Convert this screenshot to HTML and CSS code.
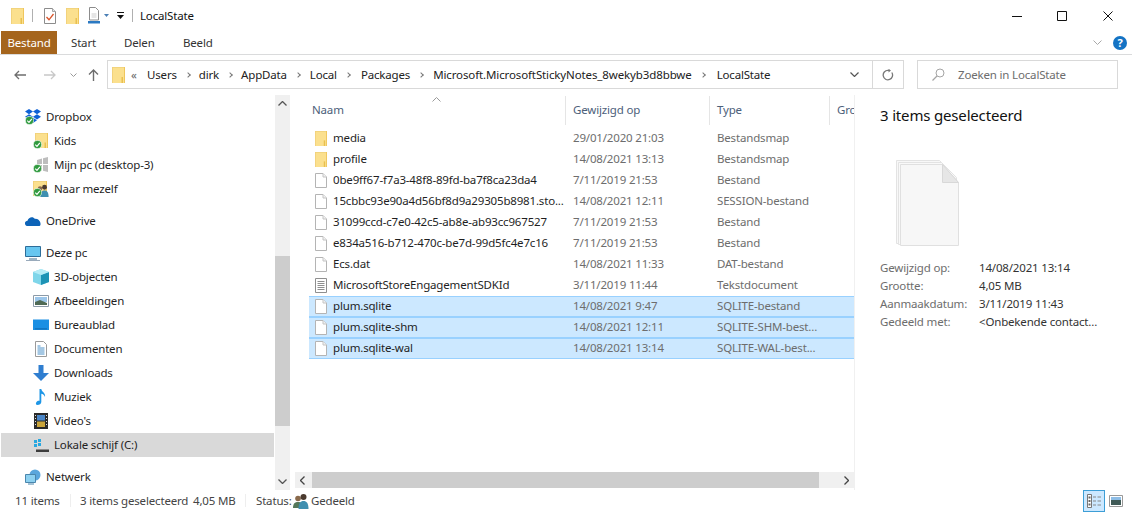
FILE: index.html
```html
<!DOCTYPE html>
<html lang="nl">
<head>
<meta charset="utf-8">
<title>LocalState</title>
<link rel="stylesheet" href="styles.css">
</head>
<body>
<svg class="defs" width="0" height="0" aria-hidden="true">
  <defs>
    <symbol id="folder" viewBox="0 0 13 16" preserveAspectRatio="none">
      <path d="M0 0h13v16H0z" fill="#fbe08e"/>
      <path d="M0 0h.8v16H0zM0 0h13v.8H0z" fill="#f0cf78"/>
      <path d="M9.500 10H11v6H9.500z" fill="#e9c04f"/>
      <path d="M12 0h1v16h-1z" fill="#efc65c"/>
    </symbol>
    <symbol id="file" viewBox="0 0 12 15" preserveAspectRatio="none">
      <path d="M.5.500h7.500l3.500 3.500v10.500H.5z" fill="#fff" stroke="#b4b4b4"/>
      <path d="M8 .5V4h3.500" fill="#f2f2f2" stroke="#c4c4c4"/>
    </symbol>
    <symbol id="textfile" viewBox="0 0 12 15" preserveAspectRatio="none">
      <path d="M.5.500h11v14H.5z" fill="#fff" stroke="#8f8f8f"/>
      <path d="M2.500 3.500h7M2.500 5.500h7M2.500 7.500h7M2.500 9.500h7M2.500 11.500h7" stroke="#8f8f8f"/>
    </symbol>
    <symbol id="badge" viewBox="0 0 10 10">
      <circle cx="5" cy="5" r="4.500" fill="#2f9a3e" stroke="#e9f5ea" stroke-width=".8"/>
      <path d="M2.500 5.200 4.400 7l3.200-3.800" fill="none" stroke="#fff" stroke-width="1.300"/>
    </symbol>
    <symbol id="people" viewBox="0 0 16 16">
      <circle cx="5" cy="5.500" r="2.800" fill="#8a6a4c"/>
      <path d="M0 15c0-4.500 2-6 5-6s5 1.500 5 6z" fill="#55785a"/>
      <circle cx="10.500" cy="4" r="3" fill="#4a3a2e"/>
      <path d="M5.500 16c0-6 2-8 5-8s5 2 5 8z" fill="#3f8fb0"/>
    </symbol>
  </defs>
</svg>

<div class="window">
  <header class="titlebar">
    <svg class="qa-folder"><use href="#folder"/></svg>
    <span class="qa-sep"></span>
    <svg class="qa-props" viewBox="0 0 12 16"><path d="M.5.500h8l3 3v12H.5z" fill="#fff" stroke="#8c8c8c"/><path d="M8.500.5v3h3" fill="#e5e5e5" stroke="#a5a5a5"/><path d="M2.500 9l2.500 2.800L9.500 6" fill="none" stroke="#d9542b" stroke-width="1.300"/></svg>
    <svg class="qa-folder"><use href="#folder"/></svg>
    <svg class="qa-new" viewBox="0 0 12 17"><path d="M1.500.5h6l3 3v9.500h-9z" fill="#fff" stroke="#8c8c8c"/><path d="M3.500 6h5v5h-5z" fill="#e6e6e6"/><path d="M0 14h12v2.500H0z" fill="#2b79c2"/></svg>
    <svg class="qa-caret" viewBox="0 0 5 3"><path d="M0 0h5L2.500 3z" fill="#4a7fb5"/></svg>
    <svg class="qa-more" viewBox="0 0 7 7"><path d="M0 .5h7" stroke="#111"/><path d="M0 3h7L3.500 7z" fill="#111"/></svg>
    <span class="qa-sep"></span>
    <span class="window-title">LocalState</span>
    <div class="caption">
      <svg class="cap-min" viewBox="0 0 10 10"><path d="M0 5.500h10" stroke="#111"/></svg>
      <svg class="cap-max" viewBox="0 0 10 10"><path d="M.5.500h9v9h-9z" fill="none" stroke="#111"/></svg>
      <svg class="cap-close" viewBox="0 0 10 10"><path d="M.5.500l9 9M9.500.500l-9 9" stroke="#111"/></svg>
    </div>
  </header>

  <nav class="tabs">
    <span class="tab tab-file">Bestand</span>
    <span class="tab tab-start">Start</span>
    <span class="tab tab-share">Delen</span>
    <span class="tab tab-view">Beeld</span>
    <span class="tabs-end">
      <svg class="ribbon-chev" viewBox="0 0 9 5"><path d="M.5.500l4 4 4-4" fill="none" stroke="#a8a8a8"/></svg>
      <span class="help">?</span>
    </span>
  </nav>

  <div class="addressrow">
    <svg class="nav-btn nav-back" viewBox="0 0 12 10"><path d="M12 5H1M5 1 1 5l4 4" fill="none" stroke="#6e6e6e" stroke-width="1.300"/></svg>
    <svg class="nav-btn nav-forward" viewBox="0 0 12 10"><path d="M0 5h11M7 1l4 4-4 4" fill="none" stroke="#c8c8c8" stroke-width="1.300"/></svg>
    <svg class="nav-recent" viewBox="0 0 7 4"><path d="M.5.500l3 3 3-3" fill="none" stroke="#9a9a9a"/></svg>
    <svg class="nav-up" viewBox="0 0 11 12"><path d="M5.500 12V1M1 5.500l4.500-4.500L10 5.500" fill="none" stroke="#6e6e6e" stroke-width="1.400"/></svg>
    <div class="address">
      <svg class="addr-folder"><use href="#folder"/></svg>
      <span class="crumb-more">«</span>
      <span class="crumb">Users</span><i class="chev"></i>
      <span class="crumb">dirk</span><i class="chev"></i>
      <span class="crumb">AppData</span><i class="chev"></i>
      <span class="crumb crumb-local">Local</span><i class="chev"></i>
      <span class="crumb crumb-packages">Packages</span><i class="chev"></i>
      <span class="crumb crumb-long">Microsoft.MicrosoftStickyNotes_8wekyb3d8bbwe</span><i class="chev"></i>
      <span class="crumb crumb-last">LocalState</span>
      <svg class="addr-drop" viewBox="0 0 9 5"><path d="M.5.500l4 4 4-4" fill="none" stroke="#555" stroke-width="1.200"/></svg>
      <span class="addr-refresh">
        <svg viewBox="0 0 12 12"><path d="M9.800 3.500A4.700 4.700 0 1 1 6 1.400H8" fill="none" stroke="#777" stroke-width="1.300"/><path d="M6.500 0 9 1.500 6.500 3.500z" fill="#777"/></svg>
      </span>
    </div>
    <div class="search">
      <svg viewBox="0 0 13 13"><circle cx="8" cy="5" r="4" fill="none" stroke="#a5a5a5"/><path d="M5 8l-4.500 4.500" stroke="#a5a5a5" stroke-width="1.200"/></svg>
      <span>Zoeken in LocalState</span>
    </div>
  </div>

  <main class="main">
    <aside class="navpane">
      <div class="tree">
        <div class="tree-group">
          <div class="tree-row">
            <svg class="ico" viewBox="0 0 16 16"><path d="M4 0 0 2.600l4 2.600 4-2.600zm8 0L8 2.600l4 2.600 4-2.600zM0 7.800l4 2.600 4-2.600-4-2.600zm12-2.600L8 7.800l4 2.600 4-2.600zM4 11.300l4 2.600 4-2.600-4-2.600z" fill="#0f62d6"/><use href="#badge" width="9" height="9" y="7"/></svg>
            <span>Dropbox</span>
          </div>
          <div class="tree-row sub">
            <svg class="ico" viewBox="0 0 16 16"><use href="#folder" x="2" width="13" height="15"/><use href="#badge" width="9" height="9" y="7"/></svg>
            <span>Kids</span>
          </div>
          <div class="tree-row sub">
            <svg class="ico" viewBox="0 0 16 16"><path d="M4 3l5-1.500V7H4zm6-1.700L15 0v7h-5zM4 8h5v5.500L4 12zm6 0h5v7l-5-1.300z" fill="#bdbdbd"/><use href="#badge" width="9" height="9" y="7"/></svg>
            <span>Mijn pc (desktop-3)</span>
          </div>
          <div class="tree-row sub">
            <svg class="ico" viewBox="0 0 16 16"><use href="#folder" width="14" height="15"/><use href="#people" x="3" y="3" width="13" height="13"/><use href="#badge" width="9" height="9" y="7"/></svg>
            <span>Naar mezelf</span>
          </div>
        </div>
        <div class="tree-group">
          <div class="tree-row">
            <svg class="ico" viewBox="0 0 16 16"><path d="M3 13c-4 0-4-5-.5-5.200C3.500 4 8 3 10 6c3-1 6 3 5.500 5.500 0 1-1 1.500-1.500 1.500z" fill="#0c63b8"/></svg>
            <span>OneDrive</span>
          </div>
        </div>
        <div class="tree-group">
          <div class="tree-row">
            <svg class="ico" viewBox="0 0 16 16"><path d="M.5 1.500h15v10H.5z" fill="#67c6f0" stroke="#2d6d99"/><path d="M4 13.500h8v1H4z" fill="#3d6a8c"/><path d="M1 15h14v1H1z" fill="#9ab"/></svg>
            <span>Deze pc</span>
          </div>
          <div class="tree-row sub">
            <svg class="ico" viewBox="0 0 16 16"><path d="M8 0l8 3v10l-8 3-8-3V3z" fill="#7fd6ea"/><path d="M8 6v10l8-3V3z" fill="#1d93b5"/><path d="M0 3l8 3 8-3-8-3z" fill="#b6ecf6"/></svg>
            <span>3D-objecten</span>
          </div>
          <div class="tree-row sub">
            <svg class="ico" viewBox="0 0 16 16"><path d="M.5 2.500h15v11H.5z" fill="#fff" stroke="#8b9aa8"/><path d="M2 4h12v5H2z" fill="#9cc6ea"/><path d="M2 9l5-2 7 3v2H2z" fill="#4f6a55"/></svg>
            <span>Afbeeldingen</span>
          </div>
          <div class="tree-row sub">
            <svg class="ico" viewBox="0 0 16 16"><path d="M0 2.500h16v10.500H0z" fill="#1a8fe3"/><path d="M2 11.500h12v.8H2z" fill="#0b5c9e"/></svg>
            <span>Bureaublad</span>
          </div>
          <div class="tree-row sub">
            <svg class="ico" viewBox="0 0 16 16"><path d="M2.500.500h8l3 3v12h-11z" fill="#fff" stroke="#9a9a9a"/><path d="M4.500 5h3M4.500 7h7M4.500 9h7M4.500 11h7M4.500 13h7" stroke="#4a90c8"/></svg>
            <span>Documenten</span>
          </div>
          <div class="tree-row sub">
            <svg class="ico" viewBox="0 0 16 16"><path d="M5.500 0h5v8H16l-8 8-8-8h5.500z" fill="#2f7ed0"/></svg>
            <span>Downloads</span>
          </div>
          <div class="tree-row sub">
            <svg class="ico" viewBox="0 0 16 16"><path d="M6.500 0h1.800c.3 3 4.700 3.800 3.700 8-.5-2-2.200-3-3.700-3.300V13c0 2-2 3-3.800 3S2.500 14.500 3.500 13c.8-1.200 2-1.500 3-1.200z" fill="#1e96e6"/></svg>
            <span>Muziek</span>
          </div>
          <div class="tree-row sub">
            <svg class="ico" viewBox="0 0 16 16"><path d="M1 0h14v16H1z" fill="#2a2a2a"/><path d="M4 2h8v5.500H4z" fill="#4a86c8"/><path d="M4 8.500h8V14H4z" fill="#c9a43a"/><path d="M2 2h1v1H2zm0 3h1v1H2zm0 3h1v1H2zm0 3h1v1H2zm11-9h1v1h-1zm0 3h1v1h-1zm0 3h1v1h-1zm0 3h1v1h-1z" fill="#ddd"/></svg>
            <span>Video's</span>
          </div>
          <div class="tree-row sub selected">
            <svg class="ico" viewBox="0 0 16 16"><path d="M1 3h3v3H1zm4-1h3v3H5zM1 7h3v3H1zm4-1h3v3H5z" fill="#28a8e0"/><path d="M3 12.500h13V15H3z" fill="#3c3c3c"/></svg>
            <span>Lokale schijf (C:)</span>
          </div>
        </div>
        <div class="tree-group">
          <div class="tree-row">
            <svg class="ico" viewBox="0 0 16 16"><circle cx="10" cy="6" r="5.500" fill="#5aa6dc"/><path d="M.5 5.500h10v8h-10z" fill="#8cd0f0" stroke="#4a86ad"/><path d="M3 14.500h6v1H3z" fill="#4a86ad"/></svg>
            <span>Netwerk</span>
          </div>
        </div>
      </div>
      <div class="vscroll">
        <svg class="sb-arrow" viewBox="0 0 9 5"><path d="M.5 4.500l4-4 4 4" fill="none" stroke="#555" stroke-width="1.300"/></svg>
        <div class="vtrack"><div class="vthumb"></div></div>
        <svg class="sb-arrow" viewBox="0 0 9 5"><path d="M.5.500l4 4 4-4" fill="none" stroke="#555" stroke-width="1.300"/></svg>
      </div>
    </aside>

    <section class="listpane">
      <div class="colhead">
        <svg class="sort" viewBox="0 0 9 5"><path d="M.5 4.500l4-4 4 4" fill="none" stroke="#9a9a9a"/></svg>
        <div class="col-name head">Naam</div>
        <div class="col-date head">Gewijzigd op</div>
        <div class="col-type head">Type</div>
        <div class="col-more head">Grc</div>
      </div>
      <div class="rows">
        <div class="row"><svg class="fi"><use href="#folder"/></svg><span class="col-name">media</span><span class="col-date">29/01/2020 21:03</span><span class="col-type">Bestandsmap</span></div>
        <div class="row"><svg class="fi"><use href="#folder"/></svg><span class="col-name">profile</span><span class="col-date">14/08/2021 13:13</span><span class="col-type">Bestandsmap</span></div>
        <div class="row"><svg class="fi"><use href="#file"/></svg><span class="col-name">0be9ff67-f7a3-48f8-89fd-ba7f8ca23da4</span><span class="col-date">7/11/2019 21:53</span><span class="col-type">Bestand</span></div>
        <div class="row"><svg class="fi"><use href="#file"/></svg><span class="col-name">15cbbc93e90a4d56bf8d9a29305b8981.sto...</span><span class="col-date">14/08/2021 12:11</span><span class="col-type">SESSION-bestand</span></div>
        <div class="row"><svg class="fi"><use href="#file"/></svg><span class="col-name">31099ccd-c7e0-42c5-ab8e-ab93cc967527</span><span class="col-date">7/11/2019 21:53</span><span class="col-type">Bestand</span></div>
        <div class="row"><svg class="fi"><use href="#file"/></svg><span class="col-name">e834a516-b712-470c-be7d-99d5fc4e7c16</span><span class="col-date">7/11/2019 21:53</span><span class="col-type">Bestand</span></div>
        <div class="row"><svg class="fi"><use href="#file"/></svg><span class="col-name">Ecs.dat</span><span class="col-date">14/08/2021 11:33</span><span class="col-type">DAT-bestand</span></div>
        <div class="row"><svg class="fi"><use href="#textfile"/></svg><span class="col-name">MicrosoftStoreEngagementSDKId</span><span class="col-date">3/11/2019 11:44</span><span class="col-type">Tekstdocument</span></div>
        <div class="row sel"><svg class="fi"><use href="#file"/></svg><span class="col-name">plum.sqlite</span><span class="col-date">14/08/2021 9:47</span><span class="col-type">SQLITE-bestand</span></div>
        <div class="row sel"><svg class="fi"><use href="#file"/></svg><span class="col-name">plum.sqlite-shm</span><span class="col-date">14/08/2021 12:11</span><span class="col-type">SQLITE-SHM-best...</span></div>
        <div class="row sel"><svg class="fi"><use href="#file"/></svg><span class="col-name">plum.sqlite-wal</span><span class="col-date">14/08/2021 13:14</span><span class="col-type">SQLITE-WAL-best...</span></div>
      </div>
      <div class="hscroll">
        <svg class="hs-arrow" viewBox="0 0 5 9"><path d="M4.500.500l-4 4 4 4" fill="none" stroke="#444" stroke-width="1.300"/></svg>
        <div class="hthumb"></div>
        <div class="htrack"></div>
        <svg class="hs-arrow" viewBox="0 0 5 9"><path d="M.5.500l4 4-4 4" fill="none" stroke="#444" stroke-width="1.300"/></svg>
      </div>
    </section>

    <aside class="details">
      <h2>3 items geselecteerd</h2>
      <svg class="stack" viewBox="0 0 63 86">
        <path d="M.5.500h43l15 15v68H.5z" fill="#f8f8f8" stroke="#e3e3e3"/>
        <path d="M2.500 2.500h43l15 15v67H2.500z" fill="#f9f9f9" stroke="#e3e3e3"/>
        <path d="M4.500 4.500h42l16 18v63H4.500z" fill="#f7f7f7" stroke="#e0e0e0"/>
        <path d="M46.500 4.500v18h16z" fill="#e6e6e6" stroke="#d8d8d8"/>
      </svg>
      <dl class="props">
        <dt>Gewijzigd op:</dt><dd>14/08/2021 13:14</dd>
        <dt>Grootte:</dt><dd>4,05 MB</dd>
        <dt>Aanmaakdatum:</dt><dd>3/11/2019 11:43</dd>
        <dt>Gedeeld met:</dt><dd>&lt;Onbekende contact...</dd>
      </dl>
    </aside>
  </main>

  <footer class="status">
    <span class="st-count">11 items</span>
    <i class="st-sep"></i>
    <span class="st-sel">3 items geselecteerd</span>
    <span class="st-size">4,05 MB</span>
    <i class="st-sep"></i>
    <span class="st-label">Status:</span>
    <svg class="st-people"><use href="#people"/></svg>
    <span>Gedeeld</span>
    <span class="views">
      <span class="view-btn active">
        <svg viewBox="0 0 16 16"><path d="M1.500 1.500h4v13h-4z" fill="#fff" stroke="#777"/><path d="M2.500 3.500h2v2h-2zm0 3.500h2v2h-2zm0 3.500h2v2h-2z" fill="#666"/><path d="M7 4h3M11.500 4H15M7 8h3M11.500 8H15M7 12h3M11.500 12H15" stroke="#888"/></svg>
      </span>
      <span class="view-btn">
        <svg viewBox="0 0 14 12"><path d="M.5.500h13v11H.5z" fill="#fff" stroke="#999"/><path d="M2 2h10v3H2z" fill="#8dbde6"/><path d="M2 5h10v5H2z" fill="#3f5a56"/></svg>
      </span>
    </span>
  </footer>
</div>
</body>
</html>
```

FILE: styles.css
```css
* { box-sizing: border-box; }
html, body { margin: 0; height: 100%; }
body {
  background: #fff;
  color: #1a1a1a;
  font: 11.5px/16px "Noto Sans", "Liberation Sans", sans-serif;
  letter-spacing: -.17px;
  overflow: hidden;
}
.defs { display: block; height: 0; }
svg { display: block; flex: none; }
.window { width: 1132px; height: 513px; display: flex; flex-direction: column; }

/* title bar */
.titlebar { height: 31px; display: flex; align-items: center; padding-left: 11px; flex: none; }
.qa-folder { width: 13px; height: 16px; }
.qa-sep { width: 1px; height: 13px; background: #b0b0b0; margin: 0 11px 0 8px; }
.qa-props { width: 12px; height: 16px; margin-right: 10px; }
.qa-new { width: 12px; height: 17px; margin-left: 9px; }
.qa-caret { width: 5px; height: 3px; margin-left: 4px; }
.qa-more { width: 7px; height: 7px; margin-left: 8px; }
.qa-more + .qa-sep { margin: 0 7px 0 8px; }
.window-title { color: #111; }
.caption { margin-left: auto; display: flex; align-items: center; }
.cap-min { width: 10px; height: 10px; margin-right: 35px; }
.cap-max { width: 10px; height: 10px; margin-right: 36px; }
.cap-close { width: 10px; height: 10px; margin-right: 19px; }

/* tabs */
.tabs { height: 24px; flex: none; display: flex; align-items: stretch; padding-left: 1px; border-bottom: 1px solid #dadbdc; }
.tab { display: flex; align-items: center; color: #333; height: 23px; }
.tab-file { background: #a5651d; color: #fff; width: 56px; justify-content: center; }
.tab-start { margin-left: 14px; width: 53px; }
.tab-share { width: 59px; }
.tabs-end { margin-left: auto; display: flex; align-items: center; padding-right: 5px; }
.ribbon-chev { width: 9px; height: 5px; margin-right: 11px; }
.help { width: 14px; height: 14px; border-radius: 50%; background: #1473c4; color: #fff; font-size: 11px; font-weight: 700; line-height: 14px; text-align: center; }

/* address row */
.addressrow { height: 29px; margin-top: 5px; display: flex; align-items: center; flex: none; padding-left: 14px; }
.nav-btn { width: 12px; height: 10px; }
.nav-forward { margin-left: 18px; }
.nav-recent { width: 7px; height: 4px; margin-left: 14px; }
.nav-up { width: 11px; height: 12px; margin-left: 11px; }
.address { margin-left: 8px; width: 797px; height: 29px; border: 1px solid #d9d9d9; display: flex; align-items: center; padding-left: 4px; color: #222; }
.addr-folder { width: 13px; height: 16px; }
.crumb-more { margin: 0 8px 0 6px; color: #666; width: 8px; }
.chev { width: 4px; height: 4px; border: solid #777; border-width: 1px 1px 0 0; transform: rotate(45deg); margin: 0 9px 0 9px; flex: none; }
.crumb-local { margin-left: 1px; }
.crumb-packages { margin-left: 2px; }
.crumb-long { margin-left: 1px; letter-spacing: -.12px; }
.crumb-last { margin-left: 3px; }
.addr-drop { width: 9px; height: 5px; margin-left: auto; margin-right: 13px; }
.addr-refresh { width: 31px; height: 27px; border-left: 1px solid #d9d9d9; display: flex; align-items: center; justify-content: center; }
.addr-refresh svg { width: 12px; height: 12px; }
.search { margin-left: 13px; width: 201px; height: 29px; border: 1px solid #d9d9d9; display: flex; align-items: center; padding-left: 14px; color: #6d6d6d; }
.search svg { width: 13px; height: 13px; margin-right: 13px; }

/* main */
.main { flex: 1; min-height: 0; display: flex; margin-top: 6px; }
.navpane { width: 291px; display: flex; flex: none; }
.tree { width: 275px; padding: 10px 1px 0 0; overflow: hidden; flex: none; }
.tree-group { margin-bottom: 8px; }
.tree-row { height: 24px; display: flex; align-items: center; padding-left: 24px; color: #1f1f1f; margin-left: 1px; }
.tree-row.sub { padding-left: 32px; }
.ico { width: 16px; height: 16px; margin-right: 5px; }
.selected { background: #d9d9d9; }
.vscroll { width: 15px; background: #f0f0f0; display: flex; flex-direction: column; align-items: center; padding: 6px 0 6px; }
.sb-arrow { width: 9px; height: 5px; }
.vtrack { flex: 1; width: 15px; padding-top: 150px; }
.vthumb { height: 170px; background: #cdcdcd; }

.listpane { width: 564px; flex: none; position: relative; display: flex; flex-direction: column; border-right: 1px solid #f0f0f0; padding-left: 18px; }
.colhead { height: 33px; display: flex; flex: none; color: #4c607a; }
.sort { position: absolute; left: 141px; top: 2px; width: 9px; height: 5px; }
.head { display: flex; align-items: center; height: 29px; margin-top: 1px; padding: 0 0 2px 3px; border-right: 1px solid #e5e5e5; }
.col-name { width: 234px; flex: none; overflow: hidden; white-space: nowrap; }
.col-date { width: 143px; flex: none; padding-left: 6px; color: #6d6d6d; white-space: nowrap; }
.col-type { width: 120px; flex: none; padding-left: 7px; color: #6d6d6d; white-space: nowrap; }
.colhead .col-name { width: 257px; padding-left: 3px; }
.colhead .col-date { width: 144px; }
.colhead .col-date, .colhead .col-type { color: #4c607a; padding-left: 7px; }
.colhead .col-more { width: 24px; border: 0; padding-left: 7px; overflow: hidden; }
.rows { flex: 1; min-height: 0; }
.row { height: 21px; display: flex; align-items: center; padding: 0 0 1px 6px; color: #1f1f1f; }
.fi { width: 12px; height: 15px; margin-right: 6px; }
.sel { background: #cce8ff; box-shadow: inset 0 1px 0 #99d1ff, inset 0 -1px 0 #99d1ff; }
.hscroll { height: 16px; margin: 0 0 2px -14px; display: flex; align-items: center; background: #f0f0f0; flex: none; }
.hs-arrow { width: 5px; height: 9px; margin: 0 5px; }
.hthumb { width: 507px; height: 16px; margin-left: 2px; background: #cdcdcd; }
.htrack { flex: 1; }

.details { flex: 1; padding: 10px 0 0 25px; }
.details h2 { margin: 0; font-size: 15px; line-height: 20px; font-weight: 400; color: #111; }
.stack { width: 63px; height: 86px; margin: 35px 0 0 16px; }
.props { margin: 13px 0 0; display: grid; grid-template-columns: 99px auto; grid-auto-rows: 18px; color: #6d6d6d; }
.props dt, .props dd { margin: 0; white-space: nowrap; line-height: 18px; }
.props dd { color: #333; }

/* status */
.status { height: 23px; flex: none; display: flex; align-items: center; padding: 0 0 2px 15px; color: #444; }
.st-count { width: 55px; flex: none; }
.st-sel { width: 113px; flex: none; margin-left: 9px; }
.st-size { width: 52px; flex: none; }
.st-sep { width: 1px; height: 13px; background: #eee; flex: none; }
.st-label { width: 36px; flex: none; margin-left: 10px; }
.st-people { width: 16px; height: 16px; margin: 0 2px 0 1px; }
.views { margin-left: auto; display: flex; align-items: center; gap: 4px; padding-right: 9px; }
.view-btn { width: 22px; height: 22px; display: flex; align-items: center; justify-content: center; }
.view-btn svg { width: 16px; height: 16px; }
.view-btn + .view-btn { width: 14px; }
.view-btn + .view-btn svg { width: 14px; height: 12px; }
.view-btn.active { background: #cce8ff; border: 1px solid #3d9ed6; }
```
